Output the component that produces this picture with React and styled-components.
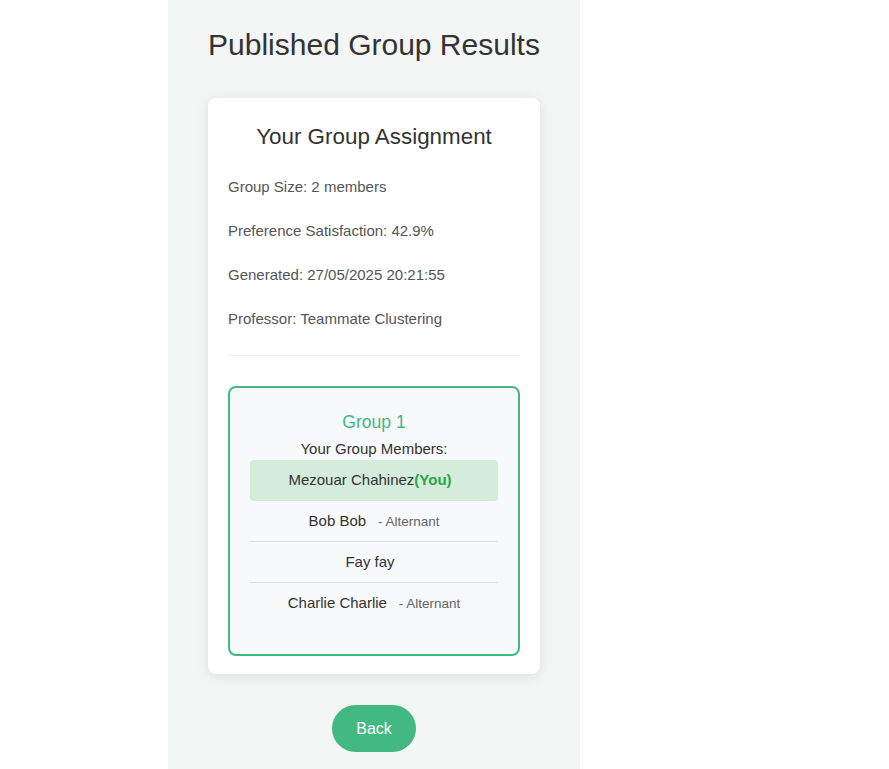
import styled, { createGlobalStyle } from "styled-components";

const GlobalStyle = createGlobalStyle`
  html, body {
    margin: 0;
    padding: 0;
    background: #ffffff;
    font-family: "Liberation Sans", Arial, sans-serif;
  }
`;

const Page = styled.div`
  display: flex;
  padding-left: 168px;
  min-height: 100vh;
`;

const Panel = styled.main`
  width: 412px;
  box-sizing: border-box;
  padding: 27px 40px 16px;
  background: #f4f5f5;
  display: flex;
  flex-direction: column;
  align-items: center;
`;

const Title = styled.h1`
  margin: 0 0 35px;
  font-size: 30px;
  line-height: 36px;
  font-weight: 400;
  color: #333;
  text-align: center;
`;

const Card = styled.section`
  width: 100%;
  box-sizing: border-box;
  background: #fff;
  border-radius: 8px;
  padding: 20px 20px 18px;
  box-shadow: 0 2px 12px rgba(0, 0, 0, 0.1);
`;

const CardTitle = styled.h2`
  margin: 5px 0 28px;
  font-size: 22.4px;
  line-height: 27px;
  font-weight: 400;
  color: #333;
  text-align: center;
`;

const Info = styled.p`
  margin: 0 0 27px;
  font-size: 15px;
  line-height: 17px;
  color: #555;
`;

const Divider = styled.hr`
  border: none;
  border-top: 1px solid #eee;
  margin: 28px 0 30px;
`;

const GroupBox = styled.div`
  border: 2px solid #42b983;
  border-radius: 8px;
  background: #f8f9fa;
  padding: 24px 20px 30px;
  text-align: center;
`;

const GroupName = styled.h3`
  margin: 0 0 8px;
  font-size: 17.6px;
  line-height: 20px;
  font-weight: 400;
  color: #42b983;
`;

const MembersLabel = styled.p`
  margin: 0 0 3px;
  font-size: 15px;
  line-height: 17px;
  color: #333;
`;

const MemberList = styled.ul`
  list-style: none;
  margin: 0;
  padding: 0;
`;

const Member = styled.li`
  padding: 12px 0;
  font-size: 15px;
  line-height: 16px;
  color: #333;
  border-radius: ${(p) => (p.$me ? "4px" : "0")};
  background: ${(p) => (p.$me ? "#d4edda" : "transparent")};
  border-bottom: 1px solid ${(p) => (p.$me || p.$last ? "transparent" : "#ddd")};
`;

const You = styled.span`
  font-weight: 700;
  color: #28a745;
`;

const Alternant = styled.span`
  margin-left: 8px;
  font-size: 13.5px;
  line-height: 1;
  color: #666;
`;

const BackButton = styled.button`
  margin-top: 31px;
  padding: 14px 24px;
  border: none;
  border-radius: 24px;
  background: #42b983;
  color: #fff;
  font-family: inherit;
  font-size: 16px;
  line-height: 19px;
  cursor: pointer;
`;

const members = [
  { name: "Mezouar Chahinez", me: true },
  { name: "Bob Bob", alternant: true },
  { name: "Fay fay" },
  { name: "Charlie Charlie", alternant: true },
];

export default function App() {
  return (
    <>
      <GlobalStyle />
      <Page>
        <Panel>
          <Title>Published Group Results</Title>
          <Card>
            <CardTitle>Your Group Assignment</CardTitle>
            <Info>Group Size: 2 members</Info>
            <Info>Preference Satisfaction: 42.9%</Info>
            <Info>Generated: 27/05/2025 20:21:55</Info>
            <Info>Professor: Teammate Clustering</Info>
            <Divider />
            <GroupBox>
              <GroupName>Group 1</GroupName>
              <MembersLabel>Your Group Members:</MembersLabel>
              <MemberList>
                {members.map((m, i) => (
                  <Member key={m.name} $me={m.me} $last={i === members.length - 1}>
                    {m.name}
                    {m.me && <You>(You)</You>}
                    <Alternant>{m.alternant ? " - Alternant" : ""}</Alternant>
                  </Member>
                ))}
              </MemberList>
            </GroupBox>
          </Card>
          <BackButton>Back</BackButton>
        </Panel>
      </Page>
    </>
  );
}
